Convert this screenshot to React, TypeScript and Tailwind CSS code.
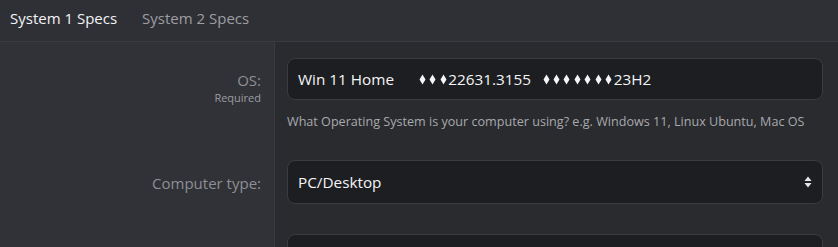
import { ReactNode } from "react";

const font = { fontFamily: '"Open Sans", "Noto Sans", "Liberation Sans", sans-serif' };

const Row = ({
  label,
  sub,
  top,
  children,
}: {
  label: string;
  sub?: string;
  top: string;
  children: ReactNode;
}) => {
  return (
    <div className="grid grid-cols-[275px_1fr]">
      <div className="bg-[#313237] border-r border-[#3a3b40] pr-[13px] flex flex-col items-end">
        <span className={`text-[15px] text-[#8d8f94] leading-[20px] ${top}`}>{label}</span>
        {sub && <span className="text-[11px] text-[#9a9ca1] leading-[14px] mt-[1px]">{sub}</span>}
      </div>
      <div className="bg-[#2a2b2f] pl-3 pr-[15px]">{children}</div>
    </div>
  );
};

// garbled characters shown as diamonds in the source
const Diamonds = ({ n }: { n: number }) => (
  <>
    {Array.from({ length: n }).map((_, i) => (
      <span key={i} className="inline-flex w-[10.4px] justify-center">
        <svg width="7" height="11" viewBox="0 0 7 11" fill="#f4f5f7">
          <path d="M3.5 0.5 L6.5 5.5 L3.5 10.5 L0.5 5.5 Z" />
        </svg>
      </span>
    ))}
  </>
);

export default function App() {
  return (
    <div className="w-[838px] h-[247px] overflow-hidden bg-[#2a2b2f]" style={font}>
      {/* tabs */}
      <div className="h-[42px] bg-[#2f3035] border-b border-[#3a3b40] flex items-center">
        <button className="pl-[10px] pr-[15px] text-[15px] text-[#f2f3f5] leading-[20px] -mt-[6px]">
          System 1 Specs
        </button>
        <button className="px-[10px] text-[15px] text-[#9c9ea3] leading-[20px] -mt-[6px]">
          System 2 Specs
        </button>
      </div>

      <Row label="OS:" sub="Required" top="mt-[28px]">
        <div className="pt-4 pb-[8px]">
          <div className="h-[42px] rounded-[8px] bg-[#1d1e21] border border-[#3b3c41] flex items-center px-[10px] text-[15.3px] text-[#f4f5f7] whitespace-pre">
            <span>Win 11 Home</span>
            <span className="w-[23px]" />
            <Diamonds n={3} />
            <span>22631.3155</span>
            <span className="w-[10px]" />
            <Diamonds n={7} />
            <span>23H2</span>
          </div>
          <p className="mt-[14px] text-[12.6px] leading-[16px] text-[#a7a9ad]">
            What Operating System is your computer using? e.g. Windows 11, Linux Ubuntu, Mac OS
          </p>
        </div>
      </Row>

      <Row label="Computer type:" top="mt-[35px]">
        <div className="pt-[22px] pb-[30px]">
          <div className="h-[44px] rounded-[8px] bg-[#1d1e21] border border-[#3b3c41] flex items-center justify-between pl-[10px] pr-[10px] text-[15.3px] text-[#f4f5f7]">
            <span>PC/Desktop</span>
            <svg width="8" height="12" viewBox="0 0 8 12" fill="#e6e7ea">
              <path d="M4 0.5 L7.5 5 L0.5 5 Z" />
              <path d="M4 11.5 L7.5 7 L0.5 7 Z" />
            </svg>
          </div>
        </div>
      </Row>

      <Row label="" top="">
        <div className="h-[44px] rounded-[8px] bg-[#1d1e21] border border-[#3b3c41]" />
      </Row>
    </div>
  );
}
